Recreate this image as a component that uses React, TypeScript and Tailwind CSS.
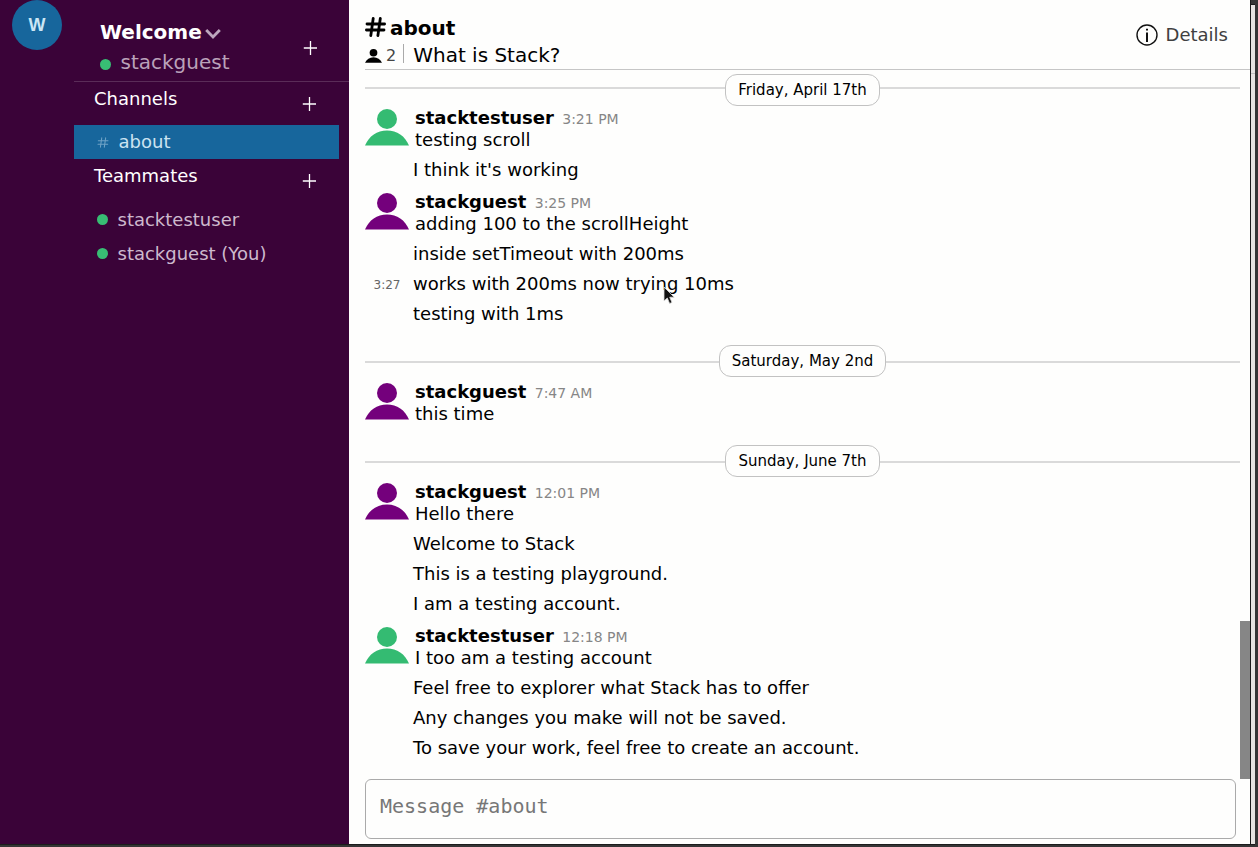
import React from "react";

type Msg = { text: string; hover?: string };
type Group = { user: string; time: string; color: string; messages: Msg[] };
type Day = { label: string; groups: Group[] };

const GREEN = "text-[#34bb72]";
const PURPLE = "text-[#74007c]";

const days: Day[] = [
  {
    label: "Friday, April 17th",
    groups: [
      {
        user: "stacktestuser",
        time: "3:21 PM",
        color: GREEN,
        messages: [{ text: "testing scroll" }, { text: "I think it's working" }],
      },
      {
        user: "stackguest",
        time: "3:25 PM",
        color: PURPLE,
        messages: [
          { text: "adding 100 to the scrollHeight" },
          { text: "inside setTimeout with 200ms" },
          { text: "works with 200ms now trying 10ms", hover: "3:27" },
          { text: "testing with 1ms" },
        ],
      },
    ],
  },
  {
    label: "Saturday, May 2nd",
    groups: [{ user: "stackguest", time: "7:47 AM", color: PURPLE, messages: [{ text: "this time" }] }],
  },
  {
    label: "Sunday, June 7th",
    groups: [
      {
        user: "stackguest",
        time: "12:01 PM",
        color: PURPLE,
        messages: [
          { text: "Hello there" },
          { text: "Welcome to Stack" },
          { text: "This is a testing playground." },
          { text: "I am a testing account." },
        ],
      },
      {
        user: "stacktestuser",
        time: "12:18 PM",
        color: GREEN,
        messages: [
          { text: "I too am a testing account" },
          { text: "Feel free to explorer what Stack has to offer" },
          { text: "Any changes you make will not be saved." },
          { text: "To save your work, feel free to create an account." },
        ],
      },
    ],
  },
];

function Person({ className }: { className: string }) {
  return (
    <svg viewBox="0 0 44 37" preserveAspectRatio="none" className={className} fill="currentColor" aria-hidden="true">
      <circle cx="22" cy="10" r="10" />
      <path d="M0 36.5C4 27 12 21.5 22 21.5S40 27 44 36.5Z" />
    </svg>
  );
}

function Plus({ className }: { className: string }) {
  return (
    <svg viewBox="0 0 14 14" className={`size-3.5 shrink-0 ${className}`} stroke="#fff" strokeWidth="1.3" aria-hidden="true">
      <path d="M7.5 0V14M0.8 7H14" />
    </svg>
  );
}

function Hash({ className, strokeWidth }: { className: string; strokeWidth: number }) {
  return (
    <svg viewBox="0 0 21 20" className={className} fill="none" stroke="currentColor" strokeWidth={strokeWidth} strokeLinecap="round" aria-hidden="true">
      <path d="M8.2 1.5L5.8 18.5M15.3 1.5L12.9 18.5M2 7H19.6M1.4 13H19" />
    </svg>
  );
}

function Pointer() {
  return (
    <svg viewBox="0 0 12 19" className="absolute top-3 left-[250px] h-[19px] w-3" aria-hidden="true">
      <path d="M1 1V15L4.3 12L6.6 17.5L9 16.4L6.7 11.2H11.2Z" fill="#111" stroke="#ddd" strokeWidth="0.8" />
    </svg>
  );
}

function MessageGroup({ group }: { group: Group }) {
  const [first, ...rest] = group.messages;
  return (
    <section>
      <div className="flex h-[54px] pt-[7px]">
        <Person className={`mt-px h-[37px] w-11 shrink-0 ${group.color}`} />
        <div className="ml-1.5">
          <div className="flex h-[22px] items-start leading-[20px]">
            <span className="text-[18px] font-bold">{group.user}</span>
            <span className="ml-[8.4px] pt-px text-[14px] text-[#868686]">{group.time}</span>
          </div>
          <p className="leading-[20px]">{first.text}</p>
        </div>
      </div>
      {rest.map((m) => (
        <div key={m.text} className="flex h-[30px] items-center">
          <span className="w-12 shrink-0 pt-px pl-[8.5px] text-[12px] text-[#666]">{m.hover}</span>
          <p className="relative leading-[20px]">
            {m.text}
            {m.hover && <Pointer />}
          </p>
        </div>
      ))}
    </section>
  );
}

function DayDivider({ label, lifted }: { label: string; lifted?: boolean }) {
  const rule = lifted ? "mt-[13px] h-[2px] flex-1 bg-[#dadada]" : "mt-4 h-[2px] flex-1 bg-[#dadada]";
  return (
    <div className={lifted ? "flex h-[43px] items-start pt-4" : "flex h-[46px] items-start pt-4"}>
      <div className={rule} />
      <span className="flex h-8 items-center rounded-[12px] border border-[#c2c2c2] px-3 text-[15px] leading-none">{label}</span>
      <div className={rule} />
    </div>
  );
}

function Sidebar() {
  return (
    <aside className="flex w-[349px] shrink-0 bg-[#3a0338] text-[#cdb9cd]">
      <div className="w-[74px] pl-3">
        <div className="flex size-[50px] items-center justify-center rounded-full bg-[#17669c] pt-px text-[18px] font-bold text-[#cbe6f5] [font-family:'Liberation_Sans',sans-serif]">W</div>
      </div>
      <div className="flex flex-1 flex-col">
        <div className="flex h-[82px] justify-between border-b border-[#5a2c58] pr-8 pl-[26px]">
          <div className="pt-[18px]">
            <div className="flex h-[28px] items-center text-[20px] font-bold text-white">
              Welcome
              <svg viewBox="0 0 16 12" className="mt-1 ml-[3px] h-3 w-4" fill="none" stroke="#bda6bd" strokeWidth="2.8" aria-hidden="true">
                <path d="M1.2 2L8 9L14.8 2" />
              </svg>
            </div>
            <div className="flex h-8 items-center text-[20px] text-[#baa2ba]">
              <span className="mt-1 mr-[9.5px] size-[11px] rounded-full bg-[#38bd74]" />
              stackguest
            </div>
          </div>
          <Plus className="mt-[41px]" />
        </div>
        <div className="flex h-[43px] justify-between pt-[5px] pr-[33px] pl-5 text-[18px] leading-6 text-white">
          Channels
          <Plus className="mt-[10px]" />
        </div>
        <div className="mr-[10px] flex h-[34px] items-center bg-[#17669c] pl-[23px] text-[18px] text-[#cbe3f1]">
          <Hash className="h-[11px] w-[12px] text-[#6fa3c6]" strokeWidth={1.9} />
          <span className="mb-[2px] ml-[9.5px]">about</span>
        </div>
        <div className="flex h-[43px] justify-between pt-[5px] pr-[33px] pl-5 text-[18px] leading-6 text-white">
          Teammates
          <Plus className="mt-[10px]" />
        </div>
        {["stacktestuser", "stackguest (You)"].map((name) => (
          <div key={name} className="flex h-[34px] items-center pl-[23px] text-[18px]">
            <span className="mr-[9.5px] size-[11px] rounded-full bg-[#38bd74]" />
            {name}
          </div>
        ))}
      </div>
    </aside>
  );
}

export default function App() {
  return (
    <div className="flex h-[847px] w-[1258px] flex-col overflow-hidden bg-[#353535] text-[18px] text-black [font-family:'DejaVu_Sans',sans-serif]">
      <div className="flex h-[844px] shrink-0">
        <Sidebar />
        <main className="flex w-[901px] shrink-0 flex-col bg-[#fefefd]">
          <header className="ml-4 flex h-[70px] shrink-0 justify-between border-b border-[#c6c6c6]">
            <div className="pt-4">
              <div className="flex h-6 items-center text-[20px] font-bold">
                <Hash className="mb-[3px] h-5 w-[21px]" strokeWidth={2.8} />
                <span className="ml-1">about</span>
              </div>
              <div className="flex h-[30px] items-center">
                <Person className="mt-0.5 h-[14px] w-[17px]" />
                <span className="ml-1 pt-px text-[16px] text-[#444]">2</span>
                <span className="mr-[9px] mb-[3px] ml-[7px] h-[19px] w-px bg-[#aaa]" />
                <span className="text-[20px]">What is Stack?</span>
              </div>
            </div>
            <div className="mr-[22px] flex h-[69px] items-center text-[18px] text-[#404040]">
              <svg viewBox="0 0 22 22" className="mr-2 size-[22px]" fill="none" stroke="#111" strokeWidth="1.4" aria-hidden="true">
                <circle cx="11" cy="11" r="10" />
                <path d="M11 8.5V18M11 4.8V6.5" strokeWidth="2" />
              </svg>
              Details
            </div>
          </header>
          <div className="flex h-[709px] shrink-0">
            <div className="flex flex-1 flex-col justify-end overflow-hidden pb-4 pl-4">
              {days.map((d, i) => (
                <div key={d.label}>
                  <DayDivider label={d.label} lifted={i === 0} />
                  {d.groups.map((g) => (
                    <MessageGroup key={g.time} group={g} />
                  ))}
                </div>
              ))}
            </div>
            <div className="flex w-[10px] flex-col justify-end">
              <div className="h-[158px] bg-[#868686]" />
            </div>
          </div>
          <div className="mr-[14px] ml-4 flex h-[60px] items-start rounded-[6px] border border-[#aaa] px-[14px] pt-[13px] text-[20px] leading-[26px] text-[#777] [font-family:'DejaVu_Sans_Mono',monospace]">
            Message #about
          </div>
        </main>
        <div className="w-px bg-[#1c1c1c]" />
        <div className="mt-1 flex w-1 flex-col border-t border-[#1c1c1c] bg-[#e6e3e1]">
          <div className="mt-[68px] h-px bg-[#c0c0c0]" />
        </div>
      </div>
      <div className="h-px w-[1255px] shrink-0 bg-[#1c1c1c]" />
    </div>
  );
}
